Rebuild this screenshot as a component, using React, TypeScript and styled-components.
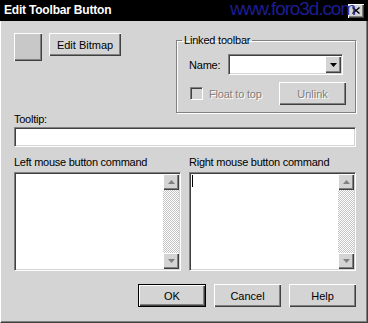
import styled, { createGlobalStyle, css } from "styled-components";

const FACE = "#d4d4d4";
const SHADOW = "#808080";
const DARK = "#404040";

const GlobalStyle = createGlobalStyle`
  html, body {
    margin: 0;
    padding: 0;
    background: ${FACE};
  }
  body {
    font-family: "Liberation Sans", Arial, sans-serif;
    font-size: 11px;
  }
`;

const sunken = css`
  box-sizing: border-box;
  border: 1px solid;
  border-color: ${SHADOW} #fff #fff ${SHADOW};
  box-shadow: inset 1px 1px ${DARK}, inset -1px -1px ${FACE};
  background: #fff;
`;

const raised = css`
  box-sizing: border-box;
  border: none;
  background: ${FACE};
  box-shadow: inset 1px 1px #fff, inset -1px -1px ${DARK},
    inset -2px -2px ${SHADOW};
`;

const Window = styled.div`
  width: 368px;
  height: 323px;
  display: flex;
  flex-direction: column;
  background: ${FACE};
  overflow: hidden;
`;

const TitleBar = styled.div`
  position: relative;
  height: 21px;
  flex-shrink: 0;
  display: flex;
  align-items: center;
  justify-content: space-between;
  padding: 0 4px;
  background: #000;
`;

const TitleText = styled.span`
  color: #fff;
  font-weight: bold;
  font-size: 12px;
  letter-spacing: -0.2px;
  line-height: 21px;
`;

// site watermark stamped over the title bar
const Watermark = styled.span`
  position: absolute;
  left: 230px;
  top: 0;
  font-size: 19px;
  line-height: 18px;
  letter-spacing: -1.1px;
  color: #2020a0;
  opacity: 0.9;
  white-space: nowrap;
  pointer-events: none;
  z-index: 2;
`;

const CloseButton = styled.div`
  ${raised};
  width: 16px;
  height: 14px;
  display: flex;
  align-items: center;
  justify-content: center;
`;

const Body = styled.div`
  flex: 1;
  display: flex;
  flex-direction: column;
  padding: 12px 11px 0 13px;
  border-left: 1px solid #fff;
  border-right: 1px solid ${DARK};
  border-bottom: 1px solid ${DARK};
  box-shadow: inset -1px -1px ${SHADOW};
`;

const TopRow = styled.div`
  display: flex;
  justify-content: space-between;
  align-items: flex-start;
`;

const BitmapArea = styled.div`
  display: flex;
  align-items: flex-start;
  gap: 7px;
`;

const Swatch = styled.div`
  ${raised};
  width: 28px;
  height: 28px;
  background: #c8c8c8;
`;

const PushButton = styled.button<{ $w: number; $h?: number; $default?: boolean }>`
  ${raised};
  width: ${(p) => p.$w}px;
  height: ${(p) => p.$h ?? 23}px;
  padding: 0;
  font-family: inherit;
  font-size: 11px;
  color: #000;
  cursor: default;
  ${(p) =>
    p.$default &&
    css`
      border: 1px solid #000;
    `}

  &:disabled {
    color: ${SHADOW};
    text-shadow: 1px 1px #fff;
  }
`;

const Group = styled.fieldset`
  width: 180px;
  box-sizing: border-box;
  margin: 1px 0 0 0;
  padding: 0;
  min-width: 0;
  border: 1px solid ${SHADOW};
  box-shadow: inset 1px 1px #fff, 1px 1px #fff;
`;

const GroupTitle = styled.legend`
  margin-left: 5px;
  padding: 0 2px;
  line-height: 13px;
  font-size: 11px;
  letter-spacing: -0.2px;
`;

const GroupBody = styled.div`
  display: flex;
  flex-direction: column;
  gap: 7px;
  padding: 7px 9px 7px 12px;
`;

const FieldRow = styled.div`
  display: flex;
  align-items: center;
`;

const SpreadRow = styled(FieldRow)`
  justify-content: space-between;
`;

const InlineLabel = styled.span`
  width: 39px;
  letter-spacing: -0.2px;
`;

const Combo = styled.div`
  ${sunken};
  width: 115px;
  height: 21px;
  display: flex;
  justify-content: flex-end;
  padding: 1px;
  margin-right: 2px;
`;

const ArrowButton = styled.div<{ $h?: number }>`
  ${raised};
  width: 16px;
  height: ${(p) => p.$h ?? 17}px;
  flex-shrink: 0;
  display: flex;
  align-items: center;
  justify-content: center;
`;

const CheckLine = styled.label`
  display: flex;
  align-items: center;
  gap: 6px;
  margin-left: 1px;
  color: ${SHADOW};
  text-shadow: 1px 1px #fff;
  letter-spacing: -0.2px;
`;

const CheckBox = styled.span`
  ${sunken};
  width: 13px;
  height: 13px;
  background: ${FACE};
`;

const FieldLabel = styled.div`
  line-height: 13px;
  letter-spacing: -0.25px;
  white-space: nowrap;
`;

const TooltipField = styled.div`
  ${sunken};
  height: 20px;
  margin-top: 1px;
`;

const CommandGrid = styled.div`
  display: grid;
  grid-template-columns: 167px 167px;
  column-gap: 8px;
  row-gap: 3px;
  margin-top: 9px;
`;

const CommandBox = styled.div`
  ${sunken};
  height: 99px;
  display: flex;
  padding: 1px;
`;

const EditArea = styled.div`
  flex: 1;
  padding: 1px;
`;

const Caret = styled.span`
  display: block;
  width: 1px;
  height: 12px;
  background: #000;
`;

const Scrollbar = styled.div`
  width: 16px;
  display: flex;
  flex-direction: column;
`;

const Track = styled.div`
  flex: 1;
  background: repeating-conic-gradient(#c4c4c4 0% 25%, #fff 0% 50%) 0 0 / 2px
    2px;
`;

const ButtonRow = styled.div`
  display: flex;
  justify-content: flex-end;
  gap: 8px;
  margin-top: 13px;
`;

function Triangle({ down, color }: { down?: boolean; color: string }) {
  return (
    <svg width="7" height="4" viewBox="0 0 7 4">
      <polygon
        points={down ? "0,0 7,0 3.5,4" : "0,4 7,4 3.5,0"}
        fill={color}
      />
    </svg>
  );
}

function CommandField({ caret }: { caret?: boolean }) {
  return (
    <CommandBox>
      <EditArea>{caret && <Caret />}</EditArea>
      <Scrollbar>
        <ArrowButton $h={16}>
          <Triangle color={SHADOW} />
        </ArrowButton>
        <Track />
        <ArrowButton $h={16}>
          <Triangle down color={SHADOW} />
        </ArrowButton>
      </Scrollbar>
    </CommandBox>
  );
}

export default function App() {
  return (
    <>
      <GlobalStyle />
      <Window>
        <TitleBar>
          <TitleText>Edit Toolbar Button</TitleText>
          <CloseButton>
            <svg width="8" height="7" viewBox="0 0 8 7">
              <path
                d="M0.5 0.5 L7.5 6.5 M7.5 0.5 L0.5 6.5"
                stroke="#000"
                strokeWidth="1.4"
              />
            </svg>
          </CloseButton>
          <Watermark>www.foro3d.com</Watermark>
        </TitleBar>

        <Body>
          <TopRow>
            <BitmapArea>
              <Swatch />
              <PushButton $w={72}>Edit Bitmap</PushButton>
            </BitmapArea>

            <Group>
              <GroupTitle>Linked toolbar</GroupTitle>
              <GroupBody>
                <FieldRow>
                  <InlineLabel>Name:</InlineLabel>
                  <Combo>
                    <ArrowButton>
                      <Triangle down color="#000" />
                    </ArrowButton>
                  </Combo>
                </FieldRow>
                <SpreadRow>
                  <CheckLine>
                    <CheckBox />
                    Float to top
                  </CheckLine>
                  <PushButton $w={67} disabled>
                    Unlink
                  </PushButton>
                </SpreadRow>
              </GroupBody>
            </Group>
          </TopRow>

          <FieldLabel>Tooltip:</FieldLabel>
          <TooltipField />

          <CommandGrid>
            <FieldLabel>Left mouse button command</FieldLabel>
            <FieldLabel>Right mouse button command</FieldLabel>
            <CommandField />
            <CommandField caret />
          </CommandGrid>

          <ButtonRow>
            <PushButton $w={68} $default>
              OK
            </PushButton>
            <PushButton $w={67}>Cancel</PushButton>
            <PushButton $w={67}>Help</PushButton>
          </ButtonRow>
        </Body>
      </Window>
    </>
  );
}
